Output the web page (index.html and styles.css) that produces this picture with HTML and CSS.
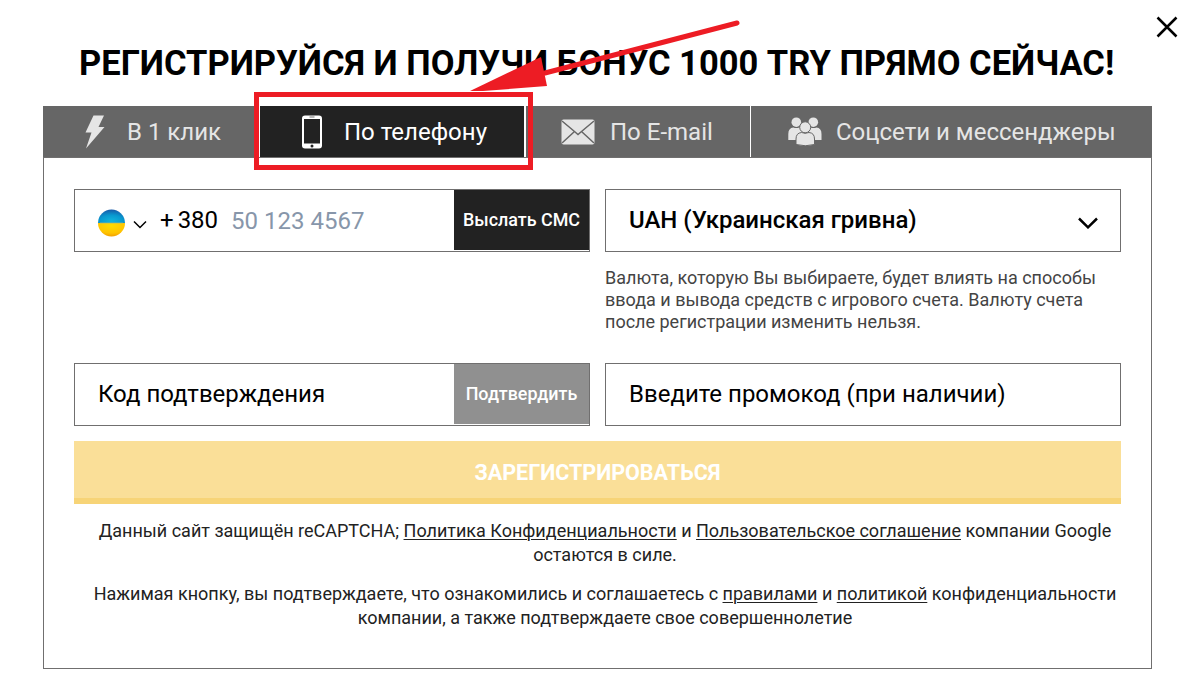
FILE: index.html
```html
<!DOCTYPE html>
<html lang="ru">
<head>
<meta charset="utf-8">
<title>Регистрация</title>
<link rel="stylesheet" href="styles.css">
</head>
<body>
<main class="modal">
  <svg class="close" viewBox="0 0 22 22"><path d="M1.5 1.5 20.500 20.500M20.500 1.500 1.500 20.500"/></svg>
  <h1 class="title"><span>РЕГИСТРИРУЙСЯ И ПОЛУЧИ БОНУС 1000 TRY ПРЯМО СЕЙЧАС!</span></h1>
  <nav class="tabs">
    <div class="tab tab-click">
      <svg class="icon-bolt" viewBox="0 0 20 34"><path d="M8.500 0.500H19L13.500 12H19.500L1 33.500 6.500 17.500H0.500Z"/></svg>
      <span>В 1 клик</span>
    </div>
    <div class="tab tab-phone">
      <svg class="icon-phone" viewBox="0 0 20 34"><rect x="0" y="0.500" width="20" height="33" rx="3" fill="#fff"/><rect x="2" y="4" width="16" height="24.500" fill="#222"/><path d="M7.500 2h5" stroke="#888" stroke-width="1.200"/><circle cx="10" cy="31" r="1.500" fill="#222"/></svg>
      <span>По телефону</span>
    </div>
    <div class="tab tab-mail">
      <svg class="icon-mail" viewBox="0 0 34 26"><rect x="0.500" y="0.500" width="33" height="25" rx="2"/><path d="M1 2 13.500 12.500 17 15.500 20.500 12.500 33 2M1 24 13.500 12.500M33 24 20.500 12.500" fill="none" stroke="#666" stroke-width="1.500"/></svg>
      <span>По E-mail</span>
    </div>
    <div class="tab tab-social">
      <svg class="icon-people" viewBox="0 0 34 29"><circle cx="8.300" cy="5.200" r="4.800"/><circle cx="25.300" cy="5.200" r="4.800"/><path d="M.300 23v-6q0-6 5-6.500 3 1.200 6 0 3 .500 4.500 4v8.500zM33.500 23v-6q0-6-5-6.500-3 1.200-6 0-3 .500-4.500 4v8.500z"/><path d="M8 27.500v-5.500q0-6 5.500-6.500 3.700 1.500 7.500 0 5.500.500 5.500 6.500v5.500q-9 2.500-18.500 0z" stroke="#666" stroke-width="1"/><circle cx="17.200" cy="10.300" r="5.500" stroke="#666" stroke-width="1"/></svg>
      <span>Соцсети и мессенджеры</span>
    </div>
  </nav>
  <section class="panel">
    <div class="fields">
      <div class="field phone-field">
        <svg class="flag" viewBox="0 0 28 28">
          <defs>
            <radialGradient id="blue" cx=".5" cy=".85" r=".85"><stop offset="0" stop-color="#12b4dc"/><stop offset=".5" stop-color="#0899d0"/><stop offset="1" stop-color="#1759a8"/></radialGradient>
            <radialGradient id="yellow" cx=".5" cy=".2" r=".9"><stop offset="0" stop-color="#ffdc00"/><stop offset=".6" stop-color="#ffc400"/><stop offset="1" stop-color="#ed9200"/></radialGradient>
          </defs>
          <path d="M0 14a13.500 13.500 0 0 1 27 0z" fill="url(#blue)"/><path d="M0 14a13.500 13.500 0 0 0 27 0z" fill="url(#yellow)"/><path d="M2 14h23" stroke="#a4b98b" stroke-width=".7"/>
        </svg>
        <svg class="chevron-small" viewBox="0 0 14 9"><path d="M1 1.500 7 7.500 13 1.500"/></svg>
        <span class="code">+<span>380</span></span>
        <span class="placeholder">50 123 4567</span>
        <span class="action"><span>Выслать СМС</span></span>
      </div>
      <div class="field currency-field">
        <span class="currency">UAH (Украинская гривна)</span>
        <svg class="chevron" viewBox="0 0 20 12"><path d="M1 1.500 10 10.300 19 1.500"/></svg>
      </div>
      <p class="hint"><span>Валюта, которую Вы выбираете, будет влиять на способы</span><br><span>ввода и вывода средств с игрового счета. Валюту счета</span><br><span>после регистрации изменить нельзя.</span></p>
      <div class="field confirm-field">
        <span class="confirm-text">Код подтверждения</span>
        <span class="action disabled"><span>Подтвердить</span></span>
      </div>
      <div class="field promo-field"><span class="promo-text">Введите промокод (при наличии)</span></div>
    </div>
    <div class="submit"><span>ЗАРЕГИСТРИРОВАТЬСЯ</span></div>
    <p class="legal">Данный сайт защищён reCAPTCHA; <u>Политика Конфиденциальности</u> и <u>Пользовательское соглашение</u> компании Google<br>остаются в силе.</p>
    <p class="legal">Нажимая кнопку, вы подтверждаете, что ознакомились и соглашаетесь с <u>правилами</u> и <u>политикой</u> конфиденциальности<br>компании, а также подтверждаете свое совершеннолетие</p>
  </section>
  <svg class="annotation" viewBox="0 0 1192 674"><rect x="256.500" y="94.500" width="274" height="73"/><path d="M545 73 737 23" stroke-linecap="round"/><path class="arrowhead" d="M470 91 541 57 547 86 483 91z"/></svg>
</main>
</body>
</html>
```
FILE: styles.css
```css
* { box-sizing: border-box; }
body { margin: 0; background: #fff; color: #000; font-family: Roboto, "Liberation Sans", sans-serif; }
.modal { position: relative; width: 1192px; height: 674px; padding: 41px 40px 0 43px; overflow: hidden; }
.close { position: absolute; left: 1156px; top: 16px; width: 22px; height: 22px; fill: none; stroke: #000; stroke-width: 2.5; }
.title { margin: 0 0 21px 36px; height: 44px; line-height: 44px; font-size: 34.5px; font-weight: 700; white-space: nowrap; }
.tabs { display: flex; width: 1109px; height: 52px; border-bottom: 1px solid #706f6f; }
.tab { display: flex; align-items: center; background: #666; color: #e5e5e5; fill: #e5e5e5; font-size: 24px; line-height: 51px; white-space: nowrap; }
.tab svg { flex: none; }
.tab span { padding-top: 1px; height: 51px; }
.tab-click { width: 217px; padding-left: 42px; gap: 22px; border-right: 1px solid #fff; }
.tab-phone { width: 266px; padding-left: 42px; gap: 22px; border-right: 2px solid #fff; background: #222; color: #fff; }
.tab-mail { width: 225px; padding-left: 35px; gap: 15px; border-right: 1px solid #fff; }
.tab-social { width: 401px; padding-left: 37px; gap: 14px; }
.icon-bolt, .icon-phone { width: 20px; height: 34px; }
.icon-mail { width: 34px; height: 26px; }
.icon-people { width: 34px; height: 29px; }
.panel { width: 1109px; height: 511px; padding: 31px 30px 0; border: 1px solid #706f6f; border-top: 0; }
.fields { display: grid; grid-template-columns: 516px 516px; grid-template-rows: 63px 111px 63px; column-gap: 15px; }
.field { display: flex; height: 63px; border: 1px solid #706f6f; padding-left: 23px; line-height: 60px; font-size: 24px; white-space: nowrap; }
.flag { width: 28px; height: 28px; margin-top: 19px; flex: none; }
.chevron-small { width: 14px; height: 9px; margin: 30px 0 0 7px; flex: none; fill: none; stroke: #000; stroke-width: 1.5; }
.code { margin-left: 13px; display: flex; gap: 4px; }
.placeholder { margin-left: 13px; padding-top: 1px; color: #8796aa; }
.action { display: flex; justify-content: center; width: 135px; height: 60px; margin-left: auto; background: #222; color: #fff; font-size: 17.9px; font-weight: 500; }
.action.disabled { background: #909090; }
.currency { font-weight: 500; }
.chevron { width: 20px; height: 12px; margin: 27px 22px 0 auto; fill: none; stroke: #000; stroke-width: 2.5; }
.hint { grid-column: 2; margin: 15px 0 0; font-size: 18px; line-height: 22px; color: #444; white-space: nowrap; }
.confirm-field { grid-column: 1; }
.submit { display: flex; justify-content: center; height: 63px; margin: 15px 0; background: #fadf98; border-bottom: 6px solid #f7d477; color: #fff; font-size: 21.5px; font-weight: 700; line-height: 64px; }
.legal { margin: 0 0 15px; padding-left: 15px; text-align: center; font-size: 18px; line-height: 24px; color: #222; white-space: nowrap; }
.legal u { text-underline-offset: 2px; text-decoration-thickness: 1px; }
.annotation { position: absolute; inset: 0; width: 1192px; height: 674px; fill: none; stroke: #ed1c24; stroke-width: 5; }
.annotation .arrowhead { fill: #ed1c24; stroke: none; }
```
